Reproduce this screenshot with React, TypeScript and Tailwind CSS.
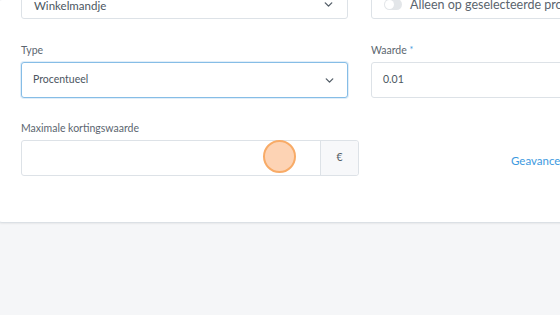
import { ChevronDown } from "lucide-react";

const inputBox = "h-[36px] bg-white border border-[#dde2e7] rounded-[3px] flex items-center";

export default function App() {
  return (
    <div className="relative w-[560px] h-[315px] overflow-hidden bg-[#f5f6f8] font-['Lato',sans-serif] text-[10.5px] text-[#4b5661]">
      {/* Card */}
      <div className="-ml-[4px] -mt-[1px] w-[820px] h-[224px] bg-white border border-[#dbe0e5] rounded-[6px] shadow-[0_1px_2px_rgba(0,0,0,0.06)] overflow-hidden">
        <div className="pl-[24px] -mt-[17px] flex flex-col">
          {/* Row 1 (cut off) */}
          <div className="flex gap-[23px]">
            <div className={`${inputBox} w-[327px] justify-between px-[12px]`}>
              <span className="text-[11.5px] pt-[9px]">Winkelmandje</span>
              <ChevronDown size={13} strokeWidth={2.5} className="text-[#555f69] mt-[6px]" />
            </div>
            <div className={`${inputBox} w-[327px] px-[12px] gap-[8px]`}>
              <span className="w-[18px] h-[11px] mt-[6px] rounded-full bg-[#e3e6e9] flex items-center px-[1px]">
                <span className="w-[9px] h-[9px] rounded-full bg-white" />
              </span>
              <span className="text-[12.5px] pt-[8px] text-[#5a646e]">Alleen op geselecteerde producten</span>
            </div>
          </div>

          {/* Row 2 */}
          <div className="flex gap-[23px] mt-[24px]">
            <div className="w-[327px] flex flex-col">
              <label className="leading-[14px] mb-[5px] text-[#5c6670]">Type</label>
              <div className="h-[36px] bg-white border border-[#86bde6] rounded-[3px] shadow-[0_0_0_1px_rgba(134,189,230,0.25)] flex items-center justify-between px-[11px]">
                <span>Procentueel</span>
                <ChevronDown size={13} strokeWidth={2.5} className="text-[#555f69]" />
              </div>
            </div>
            <div className="w-[327px] flex flex-col">
              <label className="leading-[14px] mb-[5px] text-[#5c6670]">
                Waarde <span className="text-[#3d9ae0] text-[9px] align-top">*</span>
              </label>
              <div className={`${inputBox} px-[11px]`}>
                <span>0.01</span>
              </div>
            </div>
          </div>

          {/* Row 3 */}
          <div className="flex items-end mt-[23px]">
            <div className="w-[338px] flex flex-col">
              <label className="leading-[14px] mb-[5px] text-[#5c6670]">Maximale kortingswaarde</label>
              <div className="h-[36px] bg-white border border-[#dde2e7] rounded-[3px] flex">
                <div className="flex-1" />
                <div className="w-[38px] bg-[#f7f8fa] border-l border-[#dde2e7] rounded-r-[3px] flex items-center justify-center text-[#555f69]">
                  €
                </div>
              </div>
            </div>
            <div className="ml-[152px] h-[36px] flex items-center">
              <span className="text-[11.5px] text-[#3d9ae0] pt-[5px]">Geavanceerde opties</span>
            </div>
          </div>
        </div>
      </div>

      {/* Click marker */}
      <div className="absolute left-[263px] top-[140px] w-[33px] h-[33px] rounded-full bg-[#fdd3b4] border-2 border-[#f8ab67]" />
    </div>
  );
}
